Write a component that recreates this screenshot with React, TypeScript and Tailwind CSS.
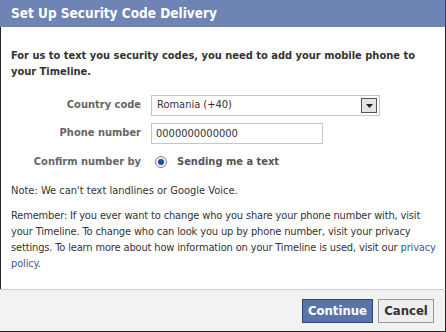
import React, {useState} from 'react';

const font = {fontFamily: '"DejaVu Sans Condensed", "DejaVu Sans", sans-serif'};

export default function App() {
    const [country, setCountry] = useState('Romania (+40)');
    const [phone, setPhone] = useState('0000000000000');

    return (
        <div className="w-[446px] h-[332px] bg-white text-[11px] text-[#333]" style={font}>
            <div className="h-[27px] bg-[#6d84b4] border-r border-[#29447e] pl-[11px] flex items-center">
                <h2 className="text-[13.5px] font-bold text-white leading-none">Set Up Security Code Delivery</h2>
            </div>
            <div className="h-[262px] border-x border-[#222] pl-[10px] pr-[6px] pt-[21px]">
                <p className="font-bold leading-[16px] pr-[4px]">
                    For us to text you security codes, you need to add your mobile phone to your Timeline.
                </p>
                <div className="mt-[15px] flex flex-col gap-[7px]">
                    <div className="flex items-center">
                        <label className="w-[130px] text-right font-bold text-[#666]">Country code</label>
                        <div className="ml-[10px] w-[229px] h-[21px] border border-[#bdc7d8] flex items-center justify-between pl-[5px] pr-[2px]">
                            <span>{country}</span>
                            <button onClick={() => setCountry('Romania (+40)')} className="w-[16px] h-[15px] border border-[#555] bg-[#e4e4e4] flex items-center justify-center">
                                <svg width="7" height="4" viewBox="0 0 7 4"><path d="M0 0h7L3.5 4z" fill="#222" /></svg>
                            </button>
                        </div>
                    </div>
                    <div className="flex items-center">
                        <label className="w-[130px] text-right font-bold text-[#666]">Phone number</label>
                        <input
                            value={phone}
                            onChange={(e) => setPhone(e.target.value)}
                            className="ml-[10px] w-[172px] h-[21px] border border-[#bdc7d8] px-[4px] text-[11px] text-[#333] outline-none"
                            style={font}
                        />
                    </div>
                    <div className="flex items-center h-[22px]">
                        <label className="w-[130px] text-right font-bold text-[#666]">Confirm number by</label>
                        <span className="ml-[14px] w-[12px] h-[12px] rounded-full border border-[#888] bg-[#eee] flex items-center justify-center">
                            <span className="w-[6px] h-[6px] rounded-full bg-[#1c4fa8]" />
                        </span>
                        <span className="ml-[10px] font-bold text-[#555]">Sending me a text</span>
                    </div>
                </div>
                <p className="mt-[10px] leading-[16px]">Note: We can't text landlines or Google Voice.</p>
                <p className="mt-[9px] leading-[16px] tracking-[-0.15px]">
                    Remember: If you ever want to change who you share your phone number with, visit your Timeline. To change who can look you up by phone number, visit your privacy settings. To learn more about how information on your Timeline is used, visit our <a href="#" className="text-[#3b5998]">privacy policy</a>.
                </p>
            </div>
            <div className="h-[43px] bg-[#f2f2f2] border-t border-[#ccc] border-r border-b border-r-[#222] border-b-[#222] flex items-center justify-end gap-[5px] pr-[11px]">
                <button className="w-[71px] h-[24px] bg-[#5b74a8] border border-[#29447e] text-white font-bold text-[13px]" style={font}>Continue</button>
                <button className="w-[56px] h-[24px] bg-[#eee] border border-[#999] text-[#333] font-bold text-[13px]" style={font}>Cancel</button>
            </div>
        </div>
    );
}
